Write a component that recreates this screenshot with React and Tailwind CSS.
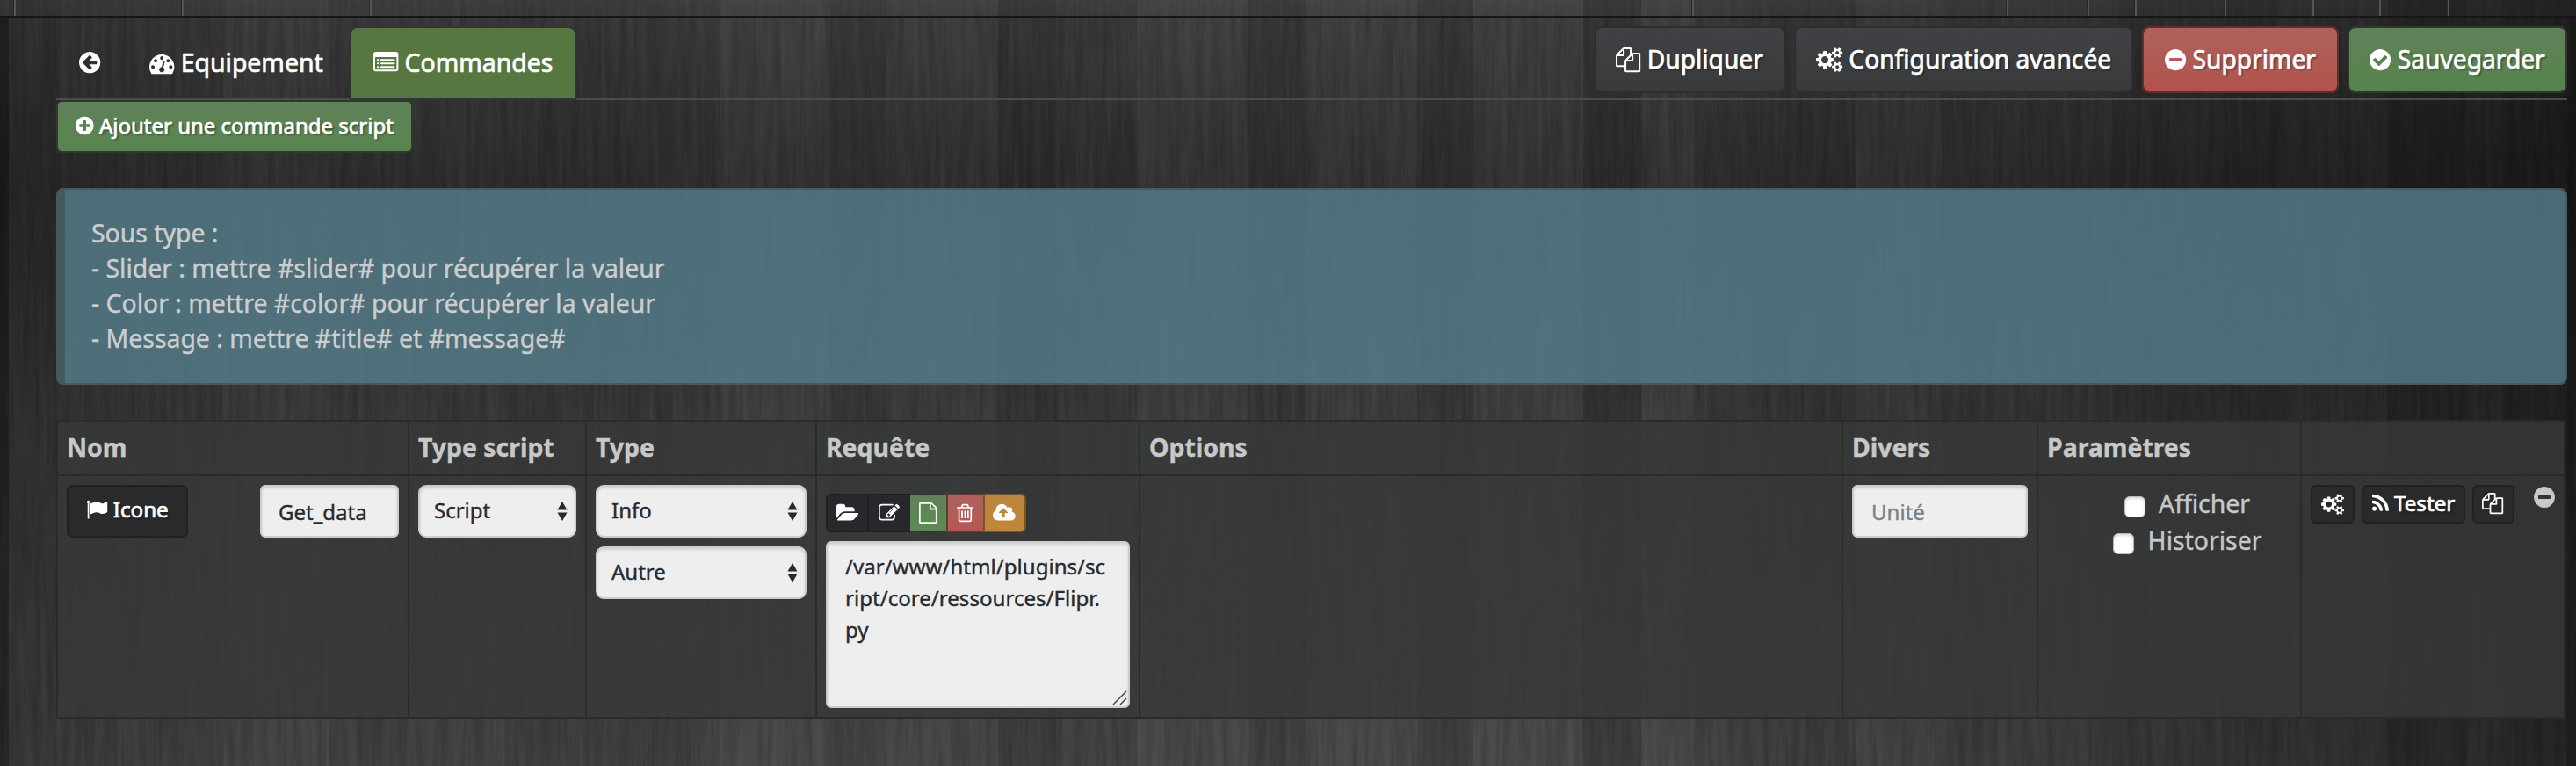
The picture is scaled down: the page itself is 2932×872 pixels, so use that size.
const DISC =
  "M1664 896q0 209-103 385.5t-279.5 279.5-385.5 103-385.5-103-279.5-279.5-103-385.5 103-385.5 279.5-279.5 385.5-103 385.5 103 279.5 279.5 103 385.5z";

const ICONS = {
  arrowLeft: ["128 0 1536 1792", "M1408 960v-128q0-26-19-45t-45-19h-502l189-189q19-19 19-45t-19-45l-91-91q-18-18-45-18t-45 18l-362 362-91 91q-18 18-18 45t18 45l91 91 362 362q18 18 45 18t45-18l91-91q18-18 18-45t-18-45l-189-189h502q26 0 45-19t19-45z" + DISC],
  plus: ["128 0 1536 1792", "M1344 960v-128q0-26-19-45t-45-19h-256v-256q0-26-19-45t-45-19h-128q-26 0-45 19t-19 45v256h-256q-26 0-45 19t-19 45v128q0 26 19 45t45 19h256v256q0 26 19 45t45 19h128q26 0 45-19t19-45v-256h256q26 0 45-19t19-45z" + DISC],
  minus: ["128 0 1536 1792", "M1344 960v-128q0-26-19-45t-45-19h-768q-26 0-45 19t-19 45v128q0 26 19 45t45 19h768q26 0 45-19t19-45z" + DISC],
  check: ["128 0 1536 1792", "M1412 734q0-28-18-46l-91-90q-19-19-45-19t-45 19l-408 407-226-226q-19-19-45-19t-45 19l-91 90q-18 18-18 46 0 27 18 45l362 362q19 19 45 19 27 0 46-19l543-543q18-18 18-45z" + DISC],
  dashboard: ["0 0 1792 1792", "M384 1152q0-53-37.5-90.5t-90.5-37.5-90.5 37.5-37.5 90.5 37.5 90.5 90.5 37.5 90.5-37.5 37.5-90.5zm192-448q0-53-37.5-90.5t-90.5-37.5-90.5 37.5-37.5 90.5 37.5 90.5 90.5 37.5 90.5-37.5 37.5-90.5zm428 481l101-382q6-26-7.5-48.5t-38.5-29.5-48 6.5-30 39.5l-101 382q-60 5-107 43.5t-63 98.5q-20 77 20 146t117 89 146-20 89-117q16-60-6-117t-72-91zm660-33q0-53-37.5-90.5t-90.5-37.5-90.5 37.5-37.5 90.5 37.5 90.5 90.5 37.5 90.5-37.5 37.5-90.5zm-640-640q0-53-37.5-90.5t-90.5-37.5-90.5 37.5-37.5 90.5 37.5 90.5 90.5 37.5 90.5-37.5 37.5-90.5zm448 192q0-53-37.5-90.5t-90.5-37.5-90.5 37.5-37.5 90.5 37.5 90.5 90.5 37.5 90.5-37.5 37.5-90.5zm320 448q0 261-141 483-19 29-54 29h-1402q-35 0-54-29-141-221-141-483 0-182 71-348t191-286 286-191 348-71 348 71 286 191 191 286 71 348z"],
  list: ["0 0 1792 1792", "M384 1184v64q0 13-9.5 22.5t-22.5 9.5h-64q-13 0-22.5-9.5t-9.5-22.5v-64q0-13 9.5-22.5t22.5-9.5h64q13 0 22.5 9.5t9.5 22.5zm0-256v64q0 13-9.5 22.5t-22.5 9.5h-64q-13 0-22.5-9.5t-9.5-22.5v-64q0-13 9.5-22.5t22.5-9.5h64q13 0 22.5 9.5t9.5 22.5zm0-256v64q0 13-9.5 22.5t-22.5 9.5h-64q-13 0-22.5-9.5t-9.5-22.5v-64q0-13 9.5-22.5t22.5-9.5h64q13 0 22.5 9.5t9.5 22.5zm1152 512v64q0 13-9.5 22.5t-22.5 9.5h-960q-13 0-22.5-9.5t-9.5-22.5v-64q0-13 9.5-22.5t22.5-9.5h960q13 0 22.5 9.5t9.5 22.5zm0-256v64q0 13-9.5 22.5t-22.5 9.5h-960q-13 0-22.5-9.5t-9.5-22.5v-64q0-13 9.5-22.5t22.5-9.5h960q13 0 22.5 9.5t9.5 22.5zm0-256v64q0 13-9.5 22.5t-22.5 9.5h-960q-13 0-22.5-9.5t-9.5-22.5v-64q0-13 9.5-22.5t22.5-9.5h960q13 0 22.5 9.5t9.5 22.5zm128 704v-832q0-13-9.5-22.5t-22.5-9.5h-1472q-13 0-22.5 9.5t-9.5 22.5v832q0 13 9.5 22.5t22.5 9.5h1472q13 0 22.5-9.5t9.5-22.5zm128-1088v1088q0 66-47 113t-113 47h-1472q-66 0-113-47t-47-113v-1088q0-66 47-113t113-47h1472q66 0 113 47t47 113z"],
  copy: ["0 0 1792 1792", "M1696 384q40 0 68 28t28 68v1216q0 40-28 68t-68 28h-960q-40 0-68-28t-28-68v-288h-544q-40 0-68-28t-28-68v-672q0-40 20-88t48-76l408-408q28-28 76-48t88-20h416q40 0 68 28t28 68v328q68-40 128-40h416zm-544 213l-299 299h299v-299zm-640-384l-299 299h299v-299zm196 647l316-316v-416h-384v416q0 40-28 68t-68 28h-416v640h512v-256q0-40 20-88t48-76zm956 804v-1152h-384v416q0 40-28 68t-68 28h-416v640h896z"],
  cogs: ["-64 0 1920 1792", "M832 896q0-106-75-181t-181-75-181 75-75 181 75 181 181 75 181-75 75-181zm768 512q0-52-38-90t-90-38-90 38-38 90q0 53 37.5 90.5t90.5 37.5 90.5-37.5 37.5-90.5zm0-1024q0-52-38-90t-90-38-90 38-38 90q0 53 37.5 90.5t90.5 37.5 90.5-37.5 37.5-90.5zm-384 421v185q0 10-7 19.5t-16 10.5l-155 24q-11 35-32 76 34 48 90 115 7 10 7 20 0 12-7 19-23 30-82.5 89.5t-78.5 59.5q-11 0-21-7l-115-90q-37 19-77 31-11 108-23 155-7 24-30 24h-186q-11 0-20-7.5t-10-17.5l-23-153q-34-10-75-31l-118 89q-7 7-20 7-11 0-21-8-144-133-144-160 0-9 7-19 10-14 41-53t47-61q-23-44-35-82l-152-24q-10-1-17-9.5t-7-19.5v-185q0-10 7-19.5t16-10.5l155-24q11-35 32-76-34-48-90-115-7-11-7-20 0-12 7-20 22-30 82-89t79-59q11 0 21 7l115 90q34-18 77-32 11-108 23-154 7-24 30-24h186q11 0 20 7.5t10 17.5l23 153q34 10 75 31l118-89q8-7 20-7 11 0 21 8 144 133 144 160 0 9-7 19-12 16-42 54t-45 60q23 48 34 82l152 23q10 2 17 10.5t7 19.5zm640 533v140q0 16-149 31-12 27-30 52 51 113 51 138 0 4-4 7-122 71-124 71-8 0-46-47t-52-68q-20 2-30 2t-30-2q-14 21-52 68t-46 47q-2 0-124-71-4-3-4-7 0-25 51-138-18-25-30-52-149-15-149-31v-140q0-16 149-31 13-29 30-52-51-113-51-138 0-4 4-7 4-2 35-20t59-34 30-16q8 0 46 46.5t52 67.5q20-2 30-2t30 2q51-71 92-112l6-2q4 0 124 70 4 3 4 7 0 25-51 138 17 23 30 52 149 15 149 31zm0-1024v140q0 16-149 31-12 27-30 52 51 113 51 138 0 4-4 7-122 71-124 71-8 0-46-47t-52-68q-20 2-30 2t-30-2q-14 21-52 68t-46 47q-2 0-124-71-4-3-4-7 0-25 51-138-18-25-30-52-149-15-149-31v-140q0-16 149-31 13-29 30-52-51-113-51-138 0-4 4-7 4-2 35-20t59-34 30-16q8 0 46 46.5t52 67.5q20-2 30-2t30 2q51-71 92-112l6-2q4 0 124 70 4 3 4 7 0 25-51 138 17 23 30 52 149 15 149 31z"],
  flag: ["0 0 1792 1792", "M320 256q0 72-64 110v1266q0 13-9.5 22.5t-22.5 9.5h-64q-13 0-22.5-9.5t-9.5-22.5v-1266q-64-38-64-110 0-53 37.5-90.5t90.5-37.5 90.5 37.5 37.5 90.5zm1472 64v763q0 25-12.5 38.5t-39.5 27.5q-215 116-369 116-61 0-123.5-22t-108.5-48-115.5-48-142.5-22q-192 0-464 146-17 9-33 9-26 0-45-19t-19-45v-742q0-32 31-55 21-14 79-43 236-120 421-120 107 0 200 29t219 88q38 19 88 19 54 0 117.5-21t110-47 88-47 54.5-21q26 0 45 19t19 45z"],
  rss: ["192 0 1408 1792", "M576 1344q0 80-56 136t-136 56-136-56-56-136 56-136 136-56 136 56 56 136zm512 123q2 28-17 48-18 21-47 21h-135q-25 0-43-16.5t-20-41.5q-22-229-184.5-391.5t-391.5-184.5q-25-2-41.5-20t-16.5-43v-135q0-29 21-47 17-17 43-17h5q160 13 306 80.5t259 181.5q114 113 181.5 259t80.5 306zm512 2q2 27-18 47-18 20-46 20h-143q-26 0-44.5-17.5t-19.5-42.5q-12-215-101-408.5t-231.5-336-336-231.5-408.5-102q-25-1-42.5-19.5t-17.5-43.5v-143q0-28 20-46 18-18 44-18h3q262 13 501.5 120t425.5 294q187 186 294 425.5t120 501.5z"],
  folder: ["0 0 1920 1792", "M1879 952q0 31-31 66l-336 396q-43 51-120.5 86.5t-143.5 35.5h-1088q-34 0-60.5-13t-26.5-43q0-31 31-66l336-396q43-51 120.5-86.5t143.5-35.5h1088q34 0 60.5 13t26.5 43zm-343-344v160h-832q-94 0-197 47.5t-164 119.5l-337 396-5 6q0-4-.5-12.5t-.5-12.5v-960q0-92 66-158t158-66h320q92 0 158 66t66 158v32h544q92 0 158 66t66 158z"],
  edit: ["0 0 1792 1792", "M888 1184l116-116-152-152-116 116v56h96v96h56zm440-720q-16-16-33 1l-350 350q-17 17-1 33t33-1l350-350q17-17 1-33zm80 594v190q0 119-84.5 203.5t-203.5 84.5h-832q-119 0-203.5-84.5t-84.5-203.5v-832q0-119 84.5-203.5t203.5-84.5h832q63 0 117 25 15 7 18 23 3 17-9 29l-49 49q-14 14-32 8-23-6-45-6h-832q-66 0-113 47t-47 113v832q0 66 47 113t113 47h832q66 0 113-47t47-113v-126q0-13 9-22l64-64q15-15 35-7t20 29zm-96-738l288 288-672 672h-288v-288zm444 132l-92 92-288-288 92-92q28-28 68-28t68 28l152 152q28 28 28 68t-28 68z"],
  file: ["128 0 1536 1792", "M1596 380q28 28 48 76t20 88v1152q0 40-28 68t-68 28h-1344q-40 0-68-28t-28-68v-1600q0-40 28-68t68-28h896q40 0 88 20t76 48zm-444-244v376h376q-10-29-22-41l-313-313q-12-12-41-22zm384 1528v-1024h-416q-40 0-68-28t-28-68v-416h-768v1536h1280z"],
  trash: ["192 0 1408 1792", "M704 736v576q0 14-9 23t-23 9h-64q-14 0-23-9t-9-23v-576q0-14 9-23t23-9h64q14 0 23 9t9 23zm256 0v576q0 14-9 23t-23 9h-64q-14 0-23-9t-9-23v-576q0-14 9-23t23-9h64q14 0 23 9t9 23zm256 0v576q0 14-9 23t-23 9h-64q-14 0-23-9t-9-23v-576q0-14 9-23t23-9h64q14 0 23 9t9 23zm128 724v-948h-896v948q0 22 7 40.5t14.5 27 10.5 8.5h832q3 0 10.5-8.5t14.5-27 7-40.5zm-672-1076h448l-48-117q-7-9-17-11h-317q-10 2-17 11zm928 32v64q0 14-9 23t-23 9h-96v948q0 83-47 143.5t-113 60.5h-832q-66 0-113-58.5t-47-141.5v-952h-96q-14 0-23-9t-9-23v-64q0-14 9-23t23-9h309l70-167q15-37 54-63t79-26h320q40 0 79 26t54 63l70 167h309q14 0 23 9t9 23z"],
  upload: ["-64 0 1920 1792", "M1216 864q0-14-9-23l-352-352q-9-9-23-9t-23 9l-351 351q-10 12-10 24 0 14 9 23t23 9h224v352q0 13 9.5 22.5t22.5 9.5h192q13 0 22.5-9.5t9.5-22.5v-352h224q13 0 22.5-9.5t9.5-22.5zm640 288q0 159-112.5 271.5t-271.5 112.5h-1088q-185 0-316.5-131.5t-131.5-316.5q0-130 70-240t188-165q-2-30-2-43 0-212 150-362t362-150q156 0 285.5 87t188.5 231q71-62 166-62 106 0 181 75t75 181q0 76-41 138 130 31 213.5 135.5t83.5 238.5z"],
};

function Icon({ name }) {
  const [viewBox, d] = ICONS[name];
  return (
    <svg viewBox={viewBox} fill="currentColor" fillRule="evenodd" className="inline-block h-[1em] w-auto shrink-0 overflow-visible align-[-0.143em]">
      <path d={d} />
    </svg>
  );
}

// [x, width, tint, opacity] of each board of the wooden backdrop
const PLANKS = [
  [10, 54, "#000", 0.08], [64, 190, "#000", 0.03], [254, 120, "#fff", 0.01], [374, 200, "#000", 0.03], [574, 179, "#000", 0.08],
  [753, 67, "#000", 0.06], [820, 125, "#fff", 0.015], [945, 64, "#000", 0.07], [1009, 127, "#fff", 0.004], [1136, 66, "#000", 0.13],
  [1202, 92, "#000", 0.05], [1294, 126, "#fff", 0.018], [1420, 66, "#000", 0.08], [1486, 127, "#fff", 0.018], [1613, 63, "#000", 0.07],
  [1676, 126, "#fff", 0.025], [1802, 66, "#000", 0.12], [1868, 60, "#fff", 0.018], [1928, 60, "#000", 0.03], [1988, 124, "#000", 0.07],
  [2112, 98, "#fff", 0.018], [2210, 62, "#000", 0.02], [2272, 132, "#fff", 0.005], [2404, 126, "#000", 0.07], [2530, 64, "#000", 0.12],
  [2594, 124, "#000", 0.06], [2718, 90, "#000", 0.2], [2808, 40, "#000", 0.12], [2848, 84, "#000", 0.2],
];

function Wood() {
  return (
    <svg className="absolute inset-0 h-full w-full" width="2932" height="872" aria-hidden="true">
      <defs>
        <linearGradient id="base" x1="0" y1="0" x2="0" y2="1">
          <stop offset="0" stopColor="#434343" />
          <stop offset="0.023" stopColor="#3e3e3e" />
          <stop offset="0.12" stopColor="#383838" />
          <stop offset="0.24" stopColor="#313131" />
          <stop offset="0.52" stopColor="#3c3c3c" />
          <stop offset="1" stopColor="#484848" />
        </linearGradient>
        <linearGradient id="side" x1="0" y1="0" x2="1" y2="0">
          <stop offset="0" stopColor="#000" stopOpacity="0.16" />
          <stop offset="0.1" stopColor="#000" stopOpacity="0.06" />
          <stop offset="0.3" stopColor="#000" stopOpacity="0" />
          <stop offset="0.65" stopColor="#000" stopOpacity="0.02" />
          <stop offset="1" stopColor="#000" stopOpacity="0.34" />
        </linearGradient>
        <filter id="dark" x="0" y="0" width="100%" height="100%">
          <feTurbulence type="fractalNoise" baseFrequency="0.13 0.009" numOctaves="4" seed="7" />
          <feColorMatrix values="0 0 0 0 0  0 0 0 0 0  0 0 0 0 0  2.2 0 0 0 -0.7" />
        </filter>
        <filter id="light" x="0" y="0" width="100%" height="100%">
          <feTurbulence type="fractalNoise" baseFrequency="0.2 0.006" numOctaves="3" seed="21" />
          <feColorMatrix values="0 0 0 0 1  0 0 0 0 1  0 0 0 0 1  0 1.6 0 0 -0.65" />
        </filter>
      </defs>
      <rect width="2932" height="872" fill="url(#base)" />
      {PLANKS.map(([x, w, fill, o]) => (
        <rect key={x} x={x} width={w} height="872" fill={fill} opacity={o} />
      ))}
      <rect y="20" width="2932" height="852" filter="url(#dark)" opacity="0.15" />
      <rect width="2932" height="20" filter="url(#dark)" opacity="0.05" />
      <rect width="2932" height="872" filter="url(#light)" opacity="0.035" />
      <rect width="2932" height="872" fill="url(#side)" />
      <rect y="20" width="10" height="852" fill="#000" opacity="0.35" />
      <rect x="2922" y="20" width="10" height="852" fill="#000" opacity="0.15" />
    </svg>
  );
}

const MENU_TICKS = [17, 208, 422, 1927, 2285, 2377, 2431, 2533, 2633, 2709, 2787];

const TEXT_SHADOW = "[-webkit-text-stroke:0.7px_currentColor] [text-shadow:2px_2px_2px_rgba(0,0,0,0.35)]";

function BigButton({ icon, className, children }) {
  return (
    <button className={`flex h-[76px] items-center justify-center rounded-lg border-2 bg-clip-padding pb-0.5 text-[28.2px] whitespace-nowrap text-white ${TEXT_SHADOW} ${className}`}>
      <span><Icon name={icon} /> {children}</span>
    </button>
  );
}

function SmallButton({ className, children }) {
  return (
    <button className={`flex items-center justify-center rounded-md border-2 border-[#1f2122] bg-[#282a2c] text-[24.2px] whitespace-nowrap text-white ${TEXT_SHADOW} ${className}`}>
      {children}
    </button>
  );
}

function GroupButton({ icon, className }) {
  return (
    <button className={`flex h-11 items-center justify-center text-[24px] text-white ${className}`}>
      <Icon name={icon} />
    </button>
  );
}

function Select({ value, className }) {
  return (
    <div className={`flex h-[60px] items-center justify-between rounded-[9px] border-2 border-[#ccc] bg-[#eee] pr-2 pl-4 text-[24px] text-[#272b30] shadow-[inset_0_2px_3px_rgba(0,0,0,0.12)] ${className}`}>
      <span className="pb-0.5">{value}</span>
      <svg width="12" height="24" viewBox="0 0 12 24" fill="#272b30">
        <path d="M6 1l5.500 9.500H.5zM6 23L.5 13.500h11z" />
      </svg>
    </div>
  );
}

function Field({ children, className }) {
  return (
    <div className={`flex h-[60px] items-center rounded-md border-2 border-[#ccc] bg-[#eee] pt-0.5 text-[24px] shadow-[inset_0_2px_3px_rgba(0,0,0,0.12)] ${className}`}>
      {children}
    </div>
  );
}

function Check({ label, className }) {
  return (
    <label className={`flex items-center justify-center leading-[42px] ${className}`}>
      <span className="mt-2 size-6 rounded-md border border-[#bbb] bg-white shadow-[inset_0_2px_3px_rgba(0,0,0,0.15)]" />
      <span>{label}</span>
    </label>
  );
}

const HEADERS = ["Nom", "Type script", "Type", "Requête", "Options", "Divers", "Paramètres", ""];
const CELL = "border-l-2 border-[#2a2c2b] px-2.5";

export default function App() {
  return (
    <div className="relative h-[872px] w-[2932px] overflow-hidden bg-[#333] font-['Noto_Sans','Open_Sans',sans-serif] text-[28.4px] text-[#c8c8c8] [-webkit-text-stroke:0.4px_currentColor]">
      <Wood />
      <div className="relative flex h-full flex-col">
        <div className="relative h-5 shrink-0 border-b-2 border-[#161616]">
          {MENU_TICKS.map((x) => (
            <span key={x} className="absolute top-0 h-[18px] w-[3px] border-r-2 border-l border-r-[#545454] border-l-[#2a2a2a]" style={{ left: x - 2 }} />
          ))}
        </div>

        <div className="flex flex-col pr-[10px] pl-16">
          <header className="flex h-[94px] items-start justify-between border-b-2 border-[#4b4b4b]">
            <nav className="flex h-[94px] items-center pt-2.5 pl-[26px] text-white [-webkit-text-stroke:0.7px_currentColor]">
              <span className="h-[82px] w-20 leading-[79px]"><Icon name="arrowLeft" /></span>
              <span className="h-[82px] w-[228px] leading-[81px] whitespace-nowrap"><Icon name="dashboard" /> Equipement</span>
              <span className="flex h-[84px] w-[258px] items-center justify-center rounded-t-lg border-2 border-[#33343a] bg-[#587640] bg-clip-padding whitespace-nowrap">
                <span className="pb-0.5"><Icon name="list" /> Commandes</span>
              </span>
            </nav>
            <div className="flex gap-2.5 pt-2.5">
              <BigButton icon="copy" className="w-[218px] border-[#2c2e2f] bg-linear-to-b from-[#404144] to-[#393a3b]">Dupliquer</BigButton>
              <BigButton icon="cogs" className="w-[386px] border-[#2c2e2f] bg-linear-to-b from-[#404144] to-[#393a3b]">Configuration avancée</BigButton>
              <BigButton icon="minus" className="w-[224px] border-[#5d2f2d] bg-linear-to-b from-[#ae625d] to-[#b3524b]">Supprimer</BigButton>
              <BigButton icon="check" className="w-[250px] border-[#2c3a2a] bg-linear-to-b from-[#60815a] to-[#55844b]">Sauvegarder</BigButton>
            </div>
          </header>

          <button className={`flex h-[60px] w-[406px] items-center justify-center rounded-md border-2 border-[#2c3a2a] bg-linear-to-b from-[#608159] to-[#58854e] bg-clip-padding pb-0.5 text-[24px] whitespace-nowrap text-white ${TEXT_SHADOW}`}>
            <span><Icon name="plus" /> Ajouter une commande script</span>
          </button>

          <div className="mt-10 h-56 rounded-lg border-2 border-l-[10px] border-[#455a5f] bg-[rgba(86,126,141,0.8)] bg-clip-padding pt-[29px] pl-[30px] leading-10 text-[#cdcdcd]">
            <p>Sous type :</p>
            <p>- Slider : mettre #slider# pour récupérer la valeur</p>
            <p>- Color : mettre #color# pour récupérer la valeur</p>
            <p>- Message : mettre #title# et #message#</p>
          </div>

          <div className="mt-10 w-[2856px] border-r-2 border-b-2 border-[#2a2c2b] bg-[rgba(54,57,55,0.82)]">
            <div className="grid h-[62px] grid-cols-[400px_202px_262px_368px_800px_222px_300px_300px] border-t-2 border-[#2a2c2b] font-bold">
              {HEADERS.map((h, i) => (
                <div key={i} className={`${CELL} leading-[59px]`}>{h}</div>
              ))}
            </div>
            <div className="grid h-[276px] grid-cols-[400px_202px_262px_368px_800px_222px_300px_300px] border-t-2 border-[#2a2c2b]">
              <div className={`${CELL} flex items-start justify-between pt-2.5`}>
                <SmallButton className="h-[60px] w-[138px] pb-1">
                  <span><Icon name="flag" /> Icone</span>
                </SmallButton>
                <Field className="w-[158px] pl-[19px] text-[#272b30]">Get_data</Field>
              </div>
              <div className={`${CELL} pt-2.5`}><Select value="Script" className="w-[180px]" /></div>
              <div className={`${CELL} flex flex-col gap-2.5 pt-2.5`}>
                <Select value="Info" className="w-60" />
                <Select value="Autre" className="w-60" />
              </div>
              <div className={`${CELL} pt-5`}>
                <div className="flex">
                  <GroupButton icon="folder" className="w-[49px] rounded-l-md border-2 border-[#1e2021] bg-[#26282b]" />
                  <GroupButton icon="edit" className="w-[47px] border-y-2 border-[#1e2021] bg-[#26282b] pr-0.5" />
                  <GroupButton icon="file" className="w-[41px] border-y-2 border-[#2c3a2a] bg-linear-to-b from-[#608159] to-[#5a8c52]" />
                  <GroupButton icon="trash" className="w-[42px] border-2 border-r-0 border-[#6b3735] bg-linear-to-b from-[#ae625d] to-[#b55750] pr-0.5" />
                  <GroupButton icon="upload" className="w-[49px] rounded-r-md border-2 border-[#77552a] bg-linear-to-b from-[#b9853f] to-[#c0873a] pr-0.5" />
                </div>
                <div className="relative mt-2.5 h-[190px] w-[346px] rounded-md border-2 border-[#ccc] bg-[#eee] px-5 pt-[9px] text-[24.1px] leading-9 text-[#272b30] shadow-[inset_0_2px_3px_rgba(0,0,0,0.12)]">
                  <p>/var/www/html/plugins/sc</p>
                  <p>ript/core/ressources/Flipr.</p>
                  <p>py</p>
                  <svg className="absolute right-px bottom-px" width="17" height="17" stroke="#444" strokeWidth="1.5">
                    <path d="M1 16L16 1M9 16L16 9" />
                  </svg>
                </div>
              </div>
              <div className={CELL} />
              <div className={`${CELL} pt-2.5`}><Field className="w-[200px] pl-5 text-[#7a8288]">Unité</Field></div>
              <div className={`${CELL} pt-2.5`}>
                <Check label="Afficher" className="gap-[15px] pl-[41px]" />
                <Check label="Historiser" className="gap-[16px] pl-[41px]" />
              </div>
              <div className={`${CELL} flex items-start gap-2 pt-2.5`}>
                <SmallButton className="h-11 w-[50px]"><Icon name="cogs" /></SmallButton>
                <SmallButton className="h-11 w-[118px] pb-0.5"><span><Icon name="rss" /> Tester</span></SmallButton>
                <SmallButton className="h-11 w-12 pr-0.5 pb-0.5"><Icon name="copy" /></SmallButton>
                <span className="ml-[14px] flex h-7 items-center text-[28px]"><Icon name="minus" /></span>
              </div>
            </div>
          </div>
        </div>
      </div>
    </div>
  );
}
